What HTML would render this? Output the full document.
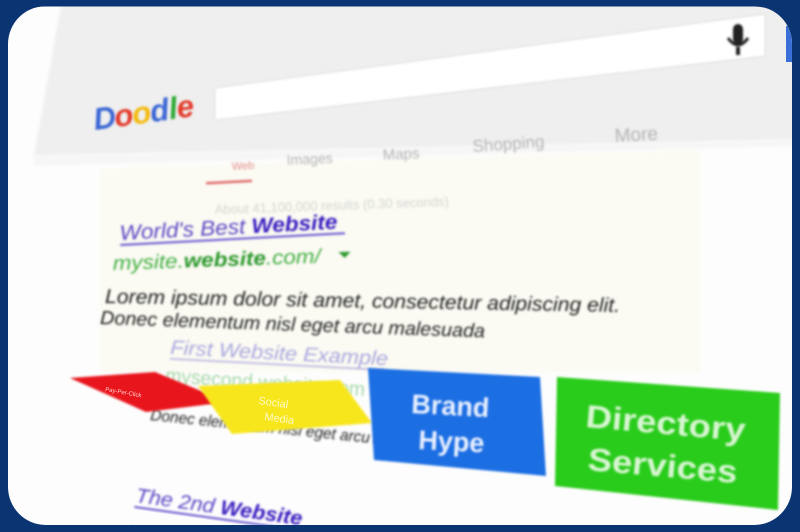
<!DOCTYPE html>
<html><head><meta charset="utf-8"><style>
html,body{margin:0;padding:0;width:800px;height:532px;overflow:hidden;background:#0b3572}
svg{display:block}
text{font-family:"Liberation Sans",sans-serif}
</style></head><body>
<svg width="800" height="532" viewBox="0 0 800 532">
<defs>
<clipPath id="c"><rect x="8" y="6" width="784" height="519" rx="38" ry="38"/></clipPath>
<filter id="b" x="-5%" y="-5%" width="110%" height="110%"><feGaussianBlur stdDeviation="1"/></filter>
<filter id="b2" x="-5%" y="-5%" width="110%" height="110%"><feGaussianBlur stdDeviation="1.6"/></filter>
</defs>
<g clip-path="url(#c)">
<rect x="0" y="0" width="800" height="532" fill="#fdfdfd"/>
<polygon points="62,0 800,0 800,140 34,156" fill="#efefef" filter="url(#b2)"/>
<polygon points="34,156 800,140 800,146 34,166" fill="#f6f6f6" filter="url(#b2)"/>
<polygon points="100,168 700,150 700,372 100,372" fill="#fbfaf3" filter="url(#b2)"/>
<polygon points="215,88 765,14 765,56 215,120" fill="#ffffff" stroke="#dedede" filter="url(#b)"/>
<rect x="786" y="26" width="14" height="36" fill="#3b6fd8"/>
<g filter="url(#b)">
<rect x="733" y="24" width="10" height="20" rx="5" fill="#222"/>
<path d="M728 38 q10 14 20 0" stroke="#222" stroke-width="3" fill="none"/>
<rect x="736" y="47" width="4" height="8" fill="#222"/>
<g transform="translate(95,130) rotate(-8)" font-weight="bold" font-style="italic" font-size="31">
<text x="0" y="0" fill="#3a66d4">D</text><text x="21" y="0" fill="#e33a2c">o</text><text x="39" y="0" fill="#f3b90a">o</text><text x="57" y="0" fill="#3a66d4">d</text><text x="76" y="0" fill="#2ea836">l</text><text x="84" y="0" fill="#e33a2c">e</text>
</g>
<g font-size="14" fill="#b5b5b5">
<text x="232" y="170" fill="#e39090" font-size="11" transform="rotate(-3 232 170)">Web</text>
<rect x="206" y="182" width="46" height="2.5" fill="#e07070" transform="rotate(-3 206 182)"/>
<text x="287" y="165" transform="rotate(-3 287 165)">Images</text>
<text x="383" y="160" transform="rotate(-3 383 160)" font-size="15">Maps</text>
<text x="473" y="152" transform="rotate(-4 473 152)" font-size="17">Shopping</text>
<text x="615" y="142" transform="rotate(-3 615 142)" font-size="19">More</text>
</g>
<text x="215" y="214" font-size="13" fill="#d6d6d2" transform="rotate(-2 215 214)">About 41,100,000 results (0.30 seconds)</text>
<g transform="translate(120,240) rotate(-3)">
<text font-size="21" font-style="italic" fill="#5b47c4" textLength="218" lengthAdjust="spacingAndGlyphs">World's Best <tspan font-weight="bold" fill="#3a1fbf">Website</tspan></text>
<rect x="0" y="4" width="225" height="2" fill="#6a5ad0"/>
</g>
<g transform="translate(113,270) rotate(-2)">
<text font-size="20" font-style="italic" fill="#43b043" textLength="208" lengthAdjust="spacingAndGlyphs">mysite.<tspan font-weight="bold" fill="#2d9a2d">website</tspan>.com/</text>
<polygon points="226,-10 238,-10 232,-4" fill="#2d9a2d"/>
</g>
<text x="105" y="303" font-size="20" font-style="italic" fill="#222" transform="rotate(1 105 303)" textLength="515" lengthAdjust="spacingAndGlyphs">Lorem ipsum dolor sit amet, consectetur adipiscing elit.</text>
<text x="100" y="324" font-size="19" font-style="italic" fill="#222" transform="rotate(2 100 324)" textLength="385" lengthAdjust="spacingAndGlyphs">Donec elementum nisl eget arcu malesuada</text>
<text x="170" y="354" font-size="20" font-style="italic" fill="#a9a8df" transform="rotate(3 170 354)" textLength="218" lengthAdjust="spacingAndGlyphs">First Website Example</text>
<rect x="170" y="358" width="215" height="1.5" fill="#b5b0e0" transform="rotate(3 170 358)"/>
<text x="165" y="382" font-size="20" fill="#a8d8a8" transform="rotate(4 165 382)" textLength="200" lengthAdjust="spacingAndGlyphs">mysecond.website.com</text>
</g>
<text x="150" y="420" font-size="16" font-style="italic" fill="#222" transform="rotate(6 150 420)" filter="url(#b)" textLength="300" lengthAdjust="spacingAndGlyphs">Donec elementum nisl eget arcu malesuada</text>
<polygon points="70,378 155,372 228,402 146,412" fill="#e8131e" filter="url(#b)"/>
<text x="105" y="391" font-size="6" fill="#ffd0d0" transform="rotate(10 105 391)">Pay-Per-Click</text>
<polygon points="198,386 340,380 372,423 232,434" fill="#f7e61a" filter="url(#b)"/>
<text x="258" y="404" font-size="11" fill="#fff9c8" transform="rotate(8 258 404)">Social</text>
<text x="264" y="420" font-size="11" fill="#fff9c8" transform="rotate(8 264 420)">Media</text>
<polygon points="368,368 540,377 546,476 374,460" fill="#1e6ee3" filter="url(#b)"/>
<g filter="url(#b)" font-weight="bold" fill="#e8f0ff" font-size="27">
<text x="411" y="413" transform="rotate(3 411 413)">Brand</text>
<text x="418" y="449" transform="rotate(3 418 449)">Hype</text>
</g>
<polygon points="557,377 780,393 778,510 555,486" fill="#2bcc1d" filter="url(#b)"/>
<g filter="url(#b)" font-weight="bold" fill="#d8f6d2" font-size="32">
<text x="585" y="427" transform="rotate(5 585 427)" textLength="160" lengthAdjust="spacingAndGlyphs">Directory</text>
<text x="587" y="470" transform="rotate(5 587 470)" textLength="150" lengthAdjust="spacingAndGlyphs">Services</text>
</g>
<g transform="translate(135,502) rotate(8)" filter="url(#b)">
<text font-size="20" font-style="italic" fill="#5b47c4" textLength="168" lengthAdjust="spacingAndGlyphs">The 2nd <tspan font-weight="bold" fill="#3a1fbf">Website</tspan></text>
<rect x="0" y="4" width="170" height="2" fill="#6a5ad0"/>
</g>
<text x="130" y="532" font-size="14" fill="#43b043" transform="rotate(8 130 532)">mys</text>
</g>
<rect x="5" y="4" width="790" height="524" rx="40" ry="40" fill="none" stroke="#0b3572" stroke-width="5"/>
</svg>
</body></html>
